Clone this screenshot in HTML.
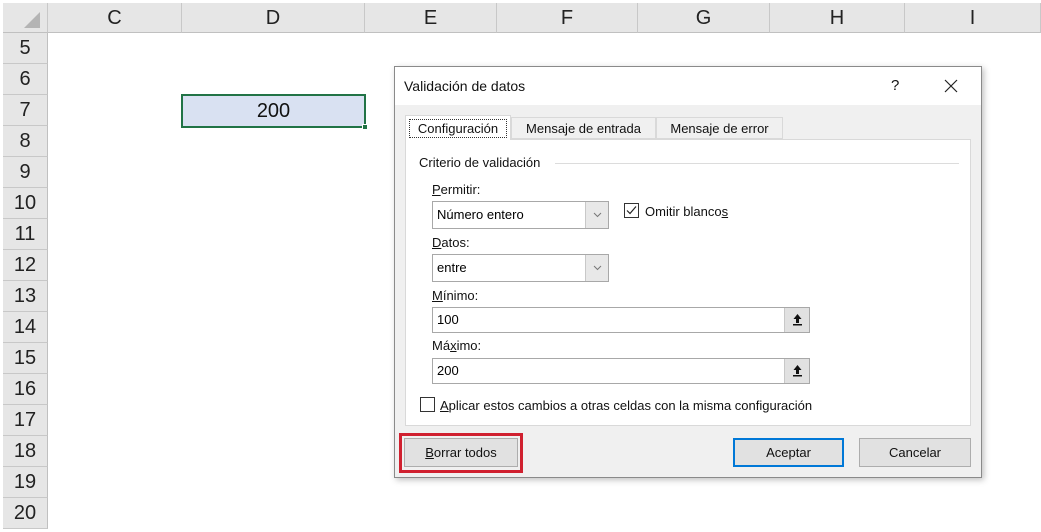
<!DOCTYPE html>
<html><head><meta charset="utf-8"><style>
*{margin:0;padding:0;box-sizing:border-box}
body{width:1041px;height:532px;background:#fff;position:relative;overflow:hidden;font-family:"Liberation Sans",sans-serif}
.a{position:absolute}
.ch{position:absolute;top:3px;height:30px;background:#e6e6e6;border-right:1px solid #c8c8c8;border-bottom:1px solid #c0c0c0;text-align:center;font-size:20px;line-height:30px;color:#222}
.rh{position:absolute;left:3px;width:45px;height:31px;background:#e6e6e6;border-bottom:1px solid #c8c8c8;border-right:1px solid #c0c0c0;text-align:center;font-size:20px;line-height:31px;color:#222}
.d{font-size:13px;color:#111}
.inp{position:absolute;background:#fff;border:1px solid #a8a8a8;font-size:13px;padding-left:4px}
.dd{position:absolute;right:0;top:0;bottom:0;width:23px;background:#e8e8e8;border-left:1px solid #c8c8c8}
.btn{position:absolute;background:#e1e1e1;border:1px solid #adadad;font-size:13px;text-align:center;color:#111}
u{text-decoration:underline}
</style></head><body>
<div class="ch" style="left:3px;width:45px"></div>
<svg class="a" style="left:22px;top:10px" width="20" height="20"><polygon points="18,2 18,18 2,18" fill="#b4b4b4"/></svg>
<div class="ch" style="left:48px;width:134px">C</div>
<div class="ch" style="left:182px;width:183px">D</div>
<div class="ch" style="left:365px;width:132px">E</div>
<div class="ch" style="left:497px;width:141px">F</div>
<div class="ch" style="left:638px;width:132px">G</div>
<div class="ch" style="left:770px;width:135px">H</div>
<div class="ch" style="left:905px;width:136px">I</div>
<div class="rh" style="top:33px">5</div><div class="rh" style="top:64px">6</div><div class="rh" style="top:95px">7</div><div class="rh" style="top:126px">8</div>
<div class="rh" style="top:157px">9</div><div class="rh" style="top:188px">10</div><div class="rh" style="top:219px">11</div><div class="rh" style="top:250px">12</div>
<div class="rh" style="top:281px">13</div><div class="rh" style="top:312px">14</div><div class="rh" style="top:343px">15</div><div class="rh" style="top:374px">16</div>
<div class="rh" style="top:405px">17</div><div class="rh" style="top:436px">18</div><div class="rh" style="top:467px">19</div><div class="rh" style="top:498px">20</div>
<div class="a" style="left:181px;top:94px;width:185px;height:34px;border:2px solid #217346;background:#d9e1f2;text-align:center;font-size:20px;line-height:30px;color:#111">200</div>
<div class="a" style="left:362px;top:124px;width:6px;height:6px;background:#217346;border:1px solid #fff"></div>

<div class="a" style="left:394px;top:66px;width:588px;height:412px;background:#f0f0f0;border:1px solid #8a8a8a;box-shadow:2px 2px 6px rgba(0,0,0,.25)">
 <div class="a" style="left:0;top:0;width:586px;height:38px;background:#fff"></div>
 <div class="a d" style="left:9px;top:11px;font-size:14px">Validación de datos</div>
 <div class="a d" style="left:496px;top:10px;font-size:15px">?</div>
 <svg class="a" style="left:549px;top:12px" width="14" height="14"><path d="M1 1L13 13M13 1L1 13" stroke="#222" stroke-width="1.2"/></svg>
 <!-- tabs -->
 <div class="a" style="left:10px;top:72px;width:566px;height:287px;background:#fff;border:1px solid #d9d9d9"></div>
 <div class="a d" style="left:10px;top:48px;width:106px;height:25px;background:#fff;border:1px solid #d9d9d9;border-bottom:none"><div style="margin:3px;border:1px dotted #333;height:19px;line-height:17px;text-align:center">Configuración</div></div>
 <div class="a d" style="left:116px;top:50px;width:145px;height:22px;background:#f0f0f0;border:1px solid #d9d9d9;line-height:22px;text-align:center">Mensaje de entrada</div>
 <div class="a d" style="left:261px;top:50px;width:127px;height:22px;background:#f0f0f0;border:1px solid #d9d9d9;line-height:22px;text-align:center">Mensaje de error</div>
 <div class="a d" style="left:24px;top:88px">Criterio de validación</div>
 <div class="a" style="left:160px;top:96px;width:404px;border-top:1px solid #dcdcdc"></div>
 <div class="a d" style="left:37px;top:115px"><u>P</u>ermitir:</div>
 <div class="inp" style="left:37px;top:134px;width:177px;height:28px;line-height:26px">Número entero<div class="dd"><svg width="23" height="26"><path d="M8 11l3.5 3.5L15 11" stroke="#777" fill="none"/></svg></div></div>
 <div class="a" style="left:229px;top:136px;width:15px;height:15px;border:1px solid #333;background:#fff"><svg width="13" height="13" style="display:block"><path d="M2 6.5l3 3 6-7" stroke="#222" fill="none" stroke-width="1.2"/></svg></div>
 <div class="a d" style="left:250px;top:137px">Omitir blanco<u>s</u></div>
 <div class="a d" style="left:37px;top:168px"><u>D</u>atos:</div>
 <div class="inp" style="left:37px;top:187px;width:177px;height:28px;line-height:26px">entre<div class="dd"><svg width="23" height="26"><path d="M8 11l3.5 3.5L15 11" stroke="#777" fill="none"/></svg></div></div>
 <div class="a d" style="left:37px;top:221px"><u>M</u>ínimo:</div>
 <div class="inp" style="left:37px;top:240px;width:378px;height:26px;line-height:24px">100<div class="dd" style="width:25px;background:#e1e1e1"><svg width="25" height="24"><path d="M12.5 6l-4 5h2.5v4h3v-4h2.5z" fill="#111"/><rect x="8" y="16" width="9" height="1.5" fill="#111"/></svg></div></div>
 <div class="a d" style="left:37px;top:271px">Má<u>x</u>imo:</div>
 <div class="inp" style="left:37px;top:291px;width:378px;height:26px;line-height:24px">200<div class="dd" style="width:25px;background:#e1e1e1"><svg width="25" height="24"><path d="M12.5 6l-4 5h2.5v4h3v-4h2.5z" fill="#111"/><rect x="8" y="16" width="9" height="1.5" fill="#111"/></svg></div></div>
 <div class="a" style="left:25px;top:330px;width:15px;height:15px;border:1px solid #333;background:#fff"></div>
 <div class="a d" style="left:45px;top:331px"><u>A</u>plicar estos cambios a otras celdas con la misma configuración</div>
 <div class="a" style="left:4px;top:366px;width:124px;height:40px;border:3px solid #d0202f"></div>
 <div class="btn" style="left:9px;top:371px;width:114px;height:29px;line-height:27px"><u>B</u>orrar todos</div>
 <div class="btn" style="left:338px;top:371px;width:111px;height:29px;line-height:25px;border:2px solid #0078d7">Aceptar</div>
 <div class="btn" style="left:464px;top:371px;width:112px;height:29px;line-height:27px">Cancelar</div>
</div>
</body></html>
